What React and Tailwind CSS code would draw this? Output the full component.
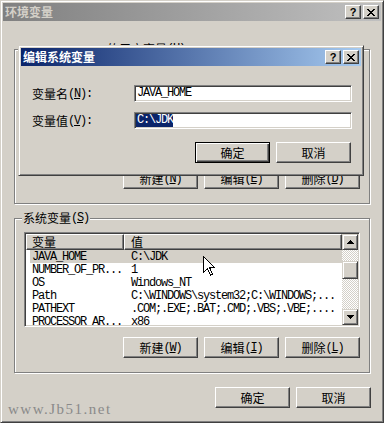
import React from "react";

const CJK = "font-['Noto_Sans_CJK_SC',sans-serif]";
const MONO = "font-['Liberation_Mono',monospace] tracking-[-1.2px]";
const RAISED =
  "border border-t-white border-l-white border-r-[#404040] border-b-[#404040] shadow-[inset_-1px_-1px_0_#808080]";
const RAISED_W =
  "border border-t-[#d4d0c8] border-l-[#d4d0c8] border-r-[#404040] border-b-[#404040] shadow-[inset_1px_1px_0_#fff,inset_-1px_-1px_0_#808080]";
const SUNKEN =
  "border border-t-[#808080] border-l-[#808080] border-r-white border-b-white shadow-[inset_1px_1px_0_#404040,inset_-1px_-1px_0_#d4d0c8]";

function Zh({ children, className = "" }) {
  return <span className={`${CJK} ${className}`}>{children}</span>;
}
function Mo({ children, className = "" }) {
  return <span className={`${MONO} ${className}`}>{children}</span>;
}

function Btn({ children, def }) {
  return (
    <div
      className={`w-[75px] h-[21px] flex items-center justify-center bg-[#d4d0c8] text-[12px] leading-none whitespace-nowrap ${
        def
          ? "border border-black shadow-[inset_1px_1px_0_#fff,inset_-1px_-1px_0_#404040,inset_-2px_-2px_0_#808080]"
          : RAISED
      }`}
    >
      {children}
    </div>
  );
}

function CloseGlyph() {
  return (
    <svg width="8" height="7" viewBox="0 0 8 7" shapeRendering="crispEdges">
      <path
        fill="#000"
        d="M0 0h2v1H0zM6 0h2v1H6zM1 1h2v1H1zM5 1h2v1H5zM2 2h4v1H2zM3 3h2v1H3zM2 4h4v1H2zM1 5h2v1H1zM5 5h2v1H5zM0 6h2v1H0zM6 6h2v1H6z"
      />
    </svg>
  );
}

function CapBtn({ children }) {
  return (
    <div className={`w-[16px] h-[14px] bg-[#d4d0c8] flex items-center justify-center ${RAISED}`}>
      {children}
    </div>
  );
}

function TitleBar({ title, active }) {
  return (
    <div
      className={`h-[18px] flex items-center justify-between pl-[2px] ${
        active
          ? "bg-[linear-gradient(to_right,#0a246a,#a6caf0)] text-white"
          : "bg-[linear-gradient(to_right,#808080,#c0c0c0)] text-[#d4d0c8]"
      }`}
    >
      <span className={`${CJK} font-bold text-[12px] leading-none`}>{title}</span>
      <div className="flex gap-[2px] mr-[2px]">
        <CapBtn>
          <span className="font-['Liberation_Sans',sans-serif] font-bold text-[11px] leading-none text-black">?</span>
        </CapBtn>
        <CapBtn>
          <CloseGlyph />
        </CapBtn>
      </div>
    </div>
  );
}

function Arrow({ down }) {
  return (
    <svg width="7" height="4" viewBox="0 0 7 4" shapeRendering="crispEdges">
      <path
        fill="#000"
        d={down ? "M0 0h7v1H6v1H5v1H4v1H3V3H2V2H1V1H0z" : "M3 0h1v1h1v1h1v1h1v1H0V3h1V2h1V1h1z"}
      />
    </svg>
  );
}

function ScrollBar() {
  return (
    <div className="w-[16px] flex flex-col bg-[repeating-conic-gradient(#fff_0_25%,#d4d0c8_0_50%)] bg-[length:2px_2px]">
      <div className={`h-[16px] bg-[#d4d0c8] flex items-center justify-center ${RAISED_W}`}>
        <Arrow />
      </div>
      <div className="h-[11px]" />
      <div className={`h-[18px] bg-[#d4d0c8] ${RAISED_W}`} />
      <div className="flex-1" />
      <div className={`h-[16px] bg-[#d4d0c8] flex items-center justify-center ${RAISED_W}`}>
        <Arrow down />
      </div>
    </div>
  );
}

function ListView({ rows }) {
  return (
    <div className={`h-[95px] bg-white p-[1px] flex overflow-hidden ${SUNKEN}`}>
      <div className="flex-1 flex flex-col overflow-hidden">
        <div className="h-[16px] flex shrink-0">
          <div className={`w-[98px] bg-[#d4d0c8] flex items-center pl-[5px] ${RAISED}`}>
            <Zh className="text-[12px] leading-none">变量</Zh>
          </div>
          <div className={`flex-1 bg-[#d4d0c8] flex items-center pl-[6px] ${RAISED}`}>
            <Zh className="text-[12px] leading-none">值</Zh>
          </div>
        </div>
        {rows.map((r, i) => (
          <div key={i} className="h-[13px] shrink-0 flex pl-[4px]">
            <div
              className={`flex-1 flex items-center whitespace-nowrap overflow-hidden ${
                r.sel ? "bg-[#d4d0c8]" : ""
              }`}
            >
              <div className="w-[94px] pl-[2px] shrink-0">
                <Mo className="text-[12px] leading-[13px]">{r.k}</Mo>
              </div>
              <div className="pl-[7px]">
                <Mo className="text-[12px] leading-[13px]">{r.v}</Mo>
              </div>
            </div>
          </div>
        ))}
      </div>
      <ScrollBar />
    </div>
  );
}

function Group({ label, labelLeft, children }) {
  return (
    <div className="relative h-[155px] border border-[#808080] shadow-[inset_1px_1px_0_#fff,1px_1px_0_#fff] pt-[13px] px-[9px] flex flex-col">
      <div
        className={`absolute -top-[8px] h-[14px] px-[1px] bg-[#d4d0c8] flex items-center whitespace-nowrap text-[12px] leading-none ${
          labelLeft ? "left-[91px]" : "left-[7px]"
        }`}
      >
        {label}
      </div>
      {children}
    </div>
  );
}

function BtnLabel({ zh, k }) {
  return (
    <>
      <Zh>{zh}</Zh>
      <Mo>
        (<u>{k}</u>)
      </Mo>
    </>
  );
}

const sysRows = [
  { k: "JAVA_HOME", v: "C:\\JDK", sel: true },
  { k: "NUMBER_OF_PR...", v: "1" },
  { k: "OS", v: "Windows_NT" },
  { k: "Path", v: "C:\\WINDOWS\\system32;C:\\WINDOWS;..." },
  { k: "PATHEXT", v: ".COM;.EXE;.BAT;.CMD;.VBS;.VBE;...." },
  { k: "PROCESSOR_AR...", v: "x86" },
];

function Field({ children }) {
  return (
    <div className={`w-[218px] h-[17px] bg-white p-[1px] flex items-center ${SUNKEN}`}>{children}</div>
  );
}

export default function App() {
  return (
    <div
      className={`relative w-[384px] h-[423px] bg-[#d4d0c8] p-[2px] flex flex-col text-black text-[12px] leading-none overflow-hidden ${RAISED_W}`}
    >
      <TitleBar title="环境变量" />

      <div className="flex flex-col px-[11px] pt-[28px]">
        <Group
          labelLeft
          label={
            <>
              <Zh>的用户变量</Zh>
              <Mo>
                (<u>U</u>)
              </Mo>
            </>
          }
        >
          <ListView rows={[]} />
          <div className="mt-[10px] flex justify-end gap-[6px]">
            <Btn>
              <BtnLabel zh="新建" k="N" />
            </Btn>
            <Btn>
              <BtnLabel zh="编辑" k="E" />
            </Btn>
            <Btn>
              <BtnLabel zh="删除" k="D" />
            </Btn>
          </div>
        </Group>

        <div className="mt-[14px]">
          <Group
            label={
              <>
                <Zh>系统变量</Zh>
                <Mo>
                  (<u>S</u>)
                </Mo>
              </>
            }
          >
            <ListView rows={sysRows} />
            <div className="mt-[10px] flex justify-end gap-[6px]">
              <Btn>
                <BtnLabel zh="新建" k="W" />
              </Btn>
              <Btn>
                <BtnLabel zh="编辑" k="I" />
              </Btn>
              <Btn>
                <BtnLabel zh="删除" k="L" />
              </Btn>
            </div>
          </Group>
        </div>
      </div>

      <div className="mt-[14px] flex justify-end gap-[6px] pr-[10px]">
        <Btn>
          <Zh>确定</Zh>
        </Btn>
        <Btn>
          <Zh>取消</Zh>
        </Btn>
      </div>

      {/* watermark */}
      <div className="absolute left-[7px] top-[398px] h-[20px] flex items-center font-['Liberation_Serif',serif] text-[15px] tracking-[1.5px] text-[#8a8a8a]">
        www.Jb51.net
      </div>

      {/* edit dialog */}
      <div
        className={`absolute left-[17px] top-[44px] w-[346px] h-[131px] bg-[#d4d0c8] p-[2px] flex flex-col ${RAISED_W}`}
      >
        <TitleBar title="编辑系统变量" active />
        <div className="flex flex-col pl-[11px] pr-[9px] pt-[19px]">
          <div className="flex items-center">
            <div className="w-[102px] flex items-center text-[12px] leading-none">
              <Zh>变量名</Zh>
              <Mo>
                (<u>N</u>):
              </Mo>
            </div>
            <Field>
              <span className={`${MONO} text-[12px] leading-[13px] h-[13px] pl-[1px]`}>JAVA_HOME</span>
            </Field>
          </div>
          <div className="flex items-center mt-[10px]">
            <div className="w-[102px] flex items-center text-[12px] leading-none">
              <Zh>变量值</Zh>
              <Mo>
                (<u>V</u>):
              </Mo>
            </div>
            <Field>
              <span
                className={`${MONO} inline-block text-[12px] leading-[13px] h-[13px] pl-[1px] bg-[#0a246a] text-white`}
              >
                C:\JDK
              </span>
            </Field>
          </div>
          <div className="mt-[13px] flex justify-end gap-[6px] mr-[1px]">
            <Btn def>
              <Zh>确定</Zh>
            </Btn>
            <Btn>
              <Zh>取消</Zh>
            </Btn>
          </div>
        </div>
      </div>

      {/* mouse cursor */}
      <svg
        className="absolute left-[202px] top-[255px]"
        width="12"
        height="20"
        viewBox="0 0 12 20"
        shapeRendering="crispEdges"
      >
        <path d="M0.5 0.5V16.5L4.5 12.5L7.5 19L9.5 18L6.5 11.5H11.5Z" fill="#fff" stroke="#000" strokeWidth="1" />
      </svg>
    </div>
  );
}
